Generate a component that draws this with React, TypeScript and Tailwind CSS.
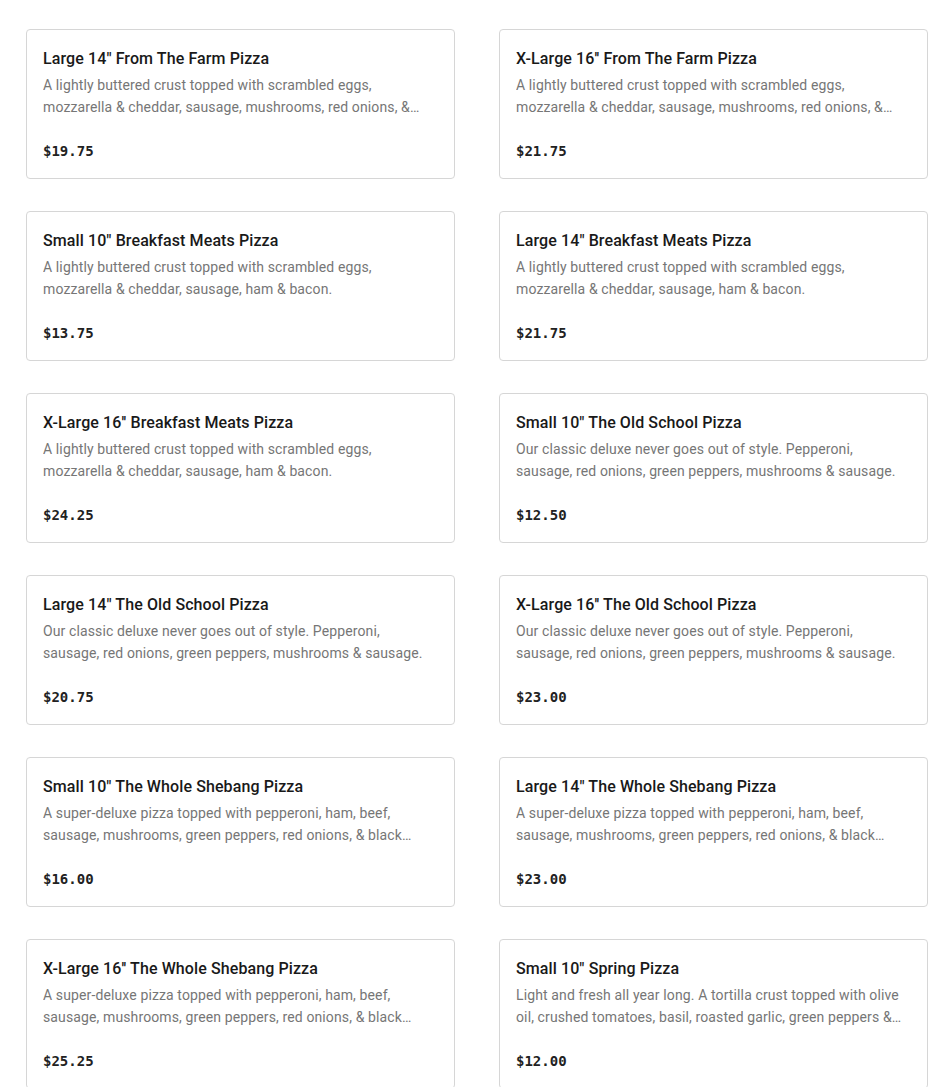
import React from 'react';

type Item = { name: string; desc: string; price: string };

const farm = 'A lightly buttered crust topped with scrambled eggs, mozzarella & cheddar, sausage, mushrooms, red onions, & green peppers.';
const meats = 'A lightly buttered crust topped with scrambled eggs, mozzarella & cheddar, sausage, ham & bacon.';
const oldSchool = 'Our classic deluxe never goes out of style. Pepperoni, sausage, red onions, green peppers, mushrooms & sausage.';
const shebang = 'A super-deluxe pizza topped with pepperoni, ham, beef, sausage, mushrooms, green peppers, red onions, & black olives.';
const spring = 'Light and fresh all year long. A tortilla crust topped with olive oil, crushed tomatoes, basil, roasted garlic, green peppers & mozzarella.';

const items: Item[] = [
  { name: 'Large 14" From The Farm Pizza', desc: farm, price: '$19.75' },
  { name: "X-Large 16'' From The Farm Pizza", desc: farm, price: '$21.75' },
  { name: 'Small 10" Breakfast Meats Pizza', desc: meats, price: '$13.75' },
  { name: 'Large 14" Breakfast Meats Pizza', desc: meats, price: '$21.75' },
  { name: "X-Large 16'' Breakfast Meats Pizza", desc: meats, price: '$24.25' },
  { name: 'Small 10" The Old School Pizza', desc: oldSchool, price: '$12.50' },
  { name: 'Large 14" The Old School Pizza', desc: oldSchool, price: '$20.75' },
  { name: "X-Large 16'' The Old School Pizza", desc: oldSchool, price: '$23.00' },
  { name: 'Small 10" The Whole Shebang Pizza', desc: shebang, price: '$16.00' },
  { name: 'Large 14" The Whole Shebang Pizza', desc: shebang, price: '$23.00' },
  { name: "X-Large 16'' The Whole Shebang Pizza", desc: shebang, price: '$25.25' },
  { name: 'Small 10" Spring Pizza', desc: spring, price: '$12.00' },
];

function MenuCard({ item }: { item: Item }) {
  return (
    <div className="flex flex-col rounded-[4px] border border-[#d6d6d6] bg-white px-4 pt-[17px] pb-[17px] h-[150px]">
      <h3 className="text-[16px] leading-6 font-medium text-[#191919] tracking-[0.1px]">{item.name}</h3>
      <p className="mt-[3px] w-[392px] text-[14px] leading-[22px] text-[#767676] tracking-[0.12px] line-clamp-2">
        {item.desc}
      </p>
      <div className="mt-auto text-[14px] leading-5 font-bold text-[#222] font-['DejaVu_Sans_Mono',monospace]">
        {item.price}
      </div>
    </div>
  );
}

export default function App() {
  return (
    <div className="min-h-screen bg-white font-['Roboto',sans-serif]">
      <div className="grid grid-cols-[429px_429px] gap-x-[44px] gap-y-[32px] pl-[26px] pt-[29px] pb-8">
        {items.map((item) => (
          <MenuCard key={item.name} item={item} />
        ))}
      </div>
    </div>
  );
}
